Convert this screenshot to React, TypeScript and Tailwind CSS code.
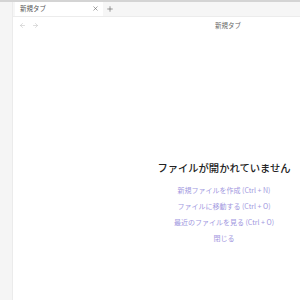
import { ArrowLeft, ArrowRight, X, Plus } from 'lucide-react';

const actions = [
  '新規ファイルを作成 (Ctrl + N)',
  'ファイルに移動する (Ctrl + O)',
  '最近のファイルを見る (Ctrl + O)',
  '閉じる',
];

export default function App() {
  return (
    <div
      className="w-[300px] h-[300px] flex flex-col overflow-hidden bg-white border-t-2 border-[#d4d4d4]"
      style={{ fontFamily: '"Noto Sans CJK JP", "Noto Sans", sans-serif' }}
    >
      <div className="flex flex-1 min-h-0">
        {/* Left ribbon */}
        <div className="w-[13px] shrink-0 bg-[#f5f5f5] border-r border-[#ebebeb]" />

        {/* Main pane */}
        <div className="flex-1 flex flex-col overflow-hidden">
          {/* Tab bar */}
          <div className="h-[15px] shrink-0 flex items-end bg-[#f6f6f6] border-b border-[#ececec]">
            <div className="w-[2px]" />
            <div className="h-[15px] w-[88px] bg-white flex items-center justify-between pl-[5px] pr-[4px]">
              <span className="text-[6.5px] text-[#555] leading-none">新規タブ</span>
              <X className="w-[7px] h-[7px] text-[#666]" strokeWidth={2} />
            </div>
            <div className="h-[15px] w-[14px] flex items-center justify-center">
              <Plus className="w-[8px] h-[8px] text-[#666]" strokeWidth={2} />
            </div>
          </div>

          {/* View content, wider than the window */}
          <div className="w-[422px] shrink-0 flex-1 flex flex-col">
            <div className="h-[17px] flex items-center pl-[6px] pr-[18px]">
              <div className="flex items-center gap-[6px] text-[#c4c4c4] w-[20px]">
                <ArrowLeft className="w-[7px] h-[7px]" strokeWidth={2} />
                <ArrowRight className="w-[7px] h-[7px]" strokeWidth={2} />
              </div>
              <div className="flex-1 text-center text-[6.5px] text-[#666] leading-none">新規タブ</div>
            </div>

            <div className="flex-1 flex flex-col items-center pt-[129px]">
              <h1 className="text-[10.3px] font-medium text-[#222] leading-none mb-[13px]">
                ファイルが開かれていません
              </h1>
              <div className="flex flex-col items-center gap-[8px]">
                {actions.map((a) => (
                  <span key={a} className="text-[7px] leading-[8px] text-[#a298e0]">
                    {a}
                  </span>
                ))}
              </div>
            </div>
          </div>
        </div>
      </div>
    </div>
  );
}
